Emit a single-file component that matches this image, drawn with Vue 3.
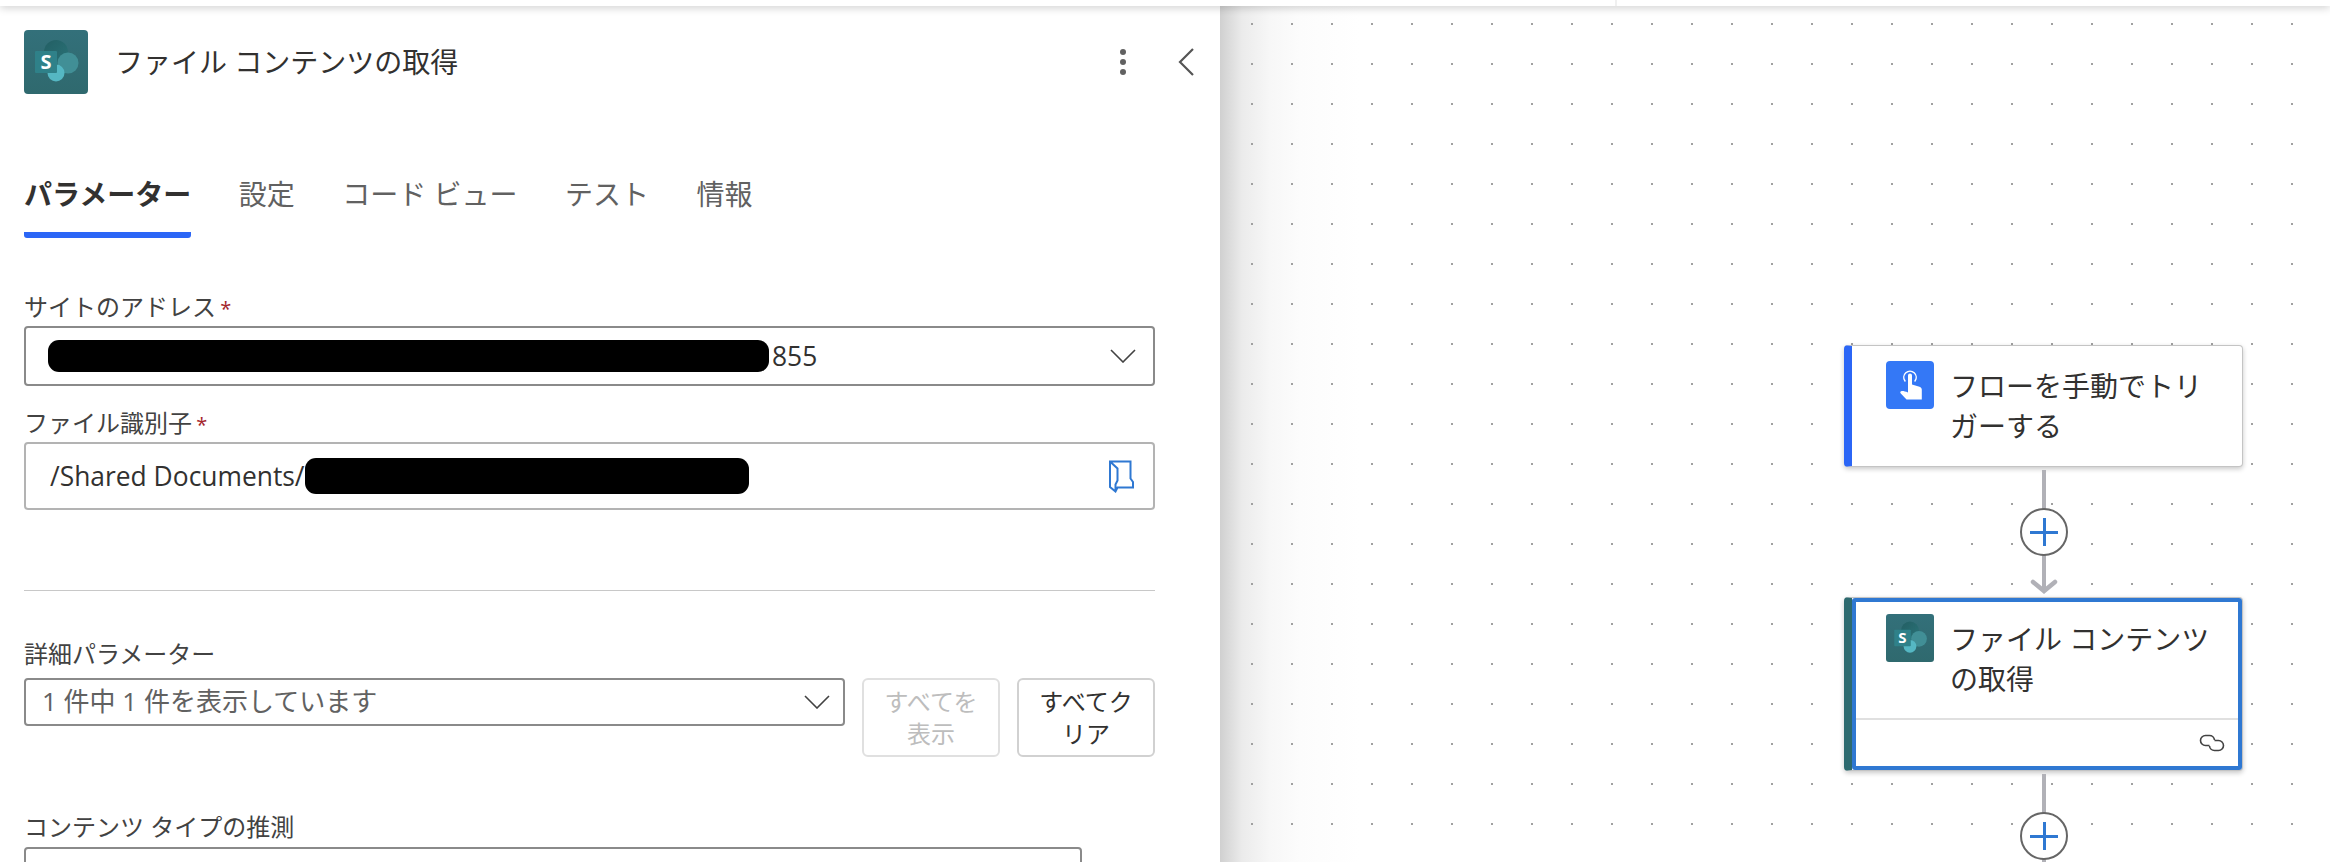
<template>
  <div class="page">
    <svg class="defs" width="0" height="0">
      <defs>
        <linearGradient id="spTile" x1="0" y1="0" x2="0" y2="1">
          <stop offset="0" stop-color="#33707a" />
          <stop offset="1" stop-color="#2f696e" />
        </linearGradient>
        <linearGradient id="spTop" x1="0" y1="0" x2="1" y2="1">
          <stop offset="0" stop-color="#235f64" />
          <stop offset="1" stop-color="#2a7277" />
        </linearGradient>
        <symbol id="spIcon" viewBox="0 0 64 64">
          <rect width="64" height="64" rx="4" fill="url(#spTile)" />
          <circle cx="32" cy="22" r="12" fill="url(#spTop)" />
          <circle cx="44" cy="33" r="10.500" fill="#418f96" />
          <circle cx="32" cy="43" r="8.500" fill="#55b7c3" />
          <rect x="11" y="21" width="22" height="22" rx="1" fill="#2f8189" />
          <text x="22" y="39" text-anchor="middle" class="sp-letter">S</text>
        </symbol>
      </defs>
    </svg>

    <div class="topbar"><span class="topbar-sep"></span></div>

    <div class="main">
      <aside class="panel">
        <header class="panel-head">
          <svg class="head-icon"><use href="#spIcon" /></svg>
          <div class="panel-title">ファイル コンテンツの取得</div>
          <svg class="kebab" width="8" height="28" viewBox="0 0 8 28">
            <circle cx="4" cy="4" r="3" />
            <circle cx="4" cy="14" r="3" />
            <circle cx="4" cy="24" r="3" />
          </svg>
          <svg class="collapse" width="16" height="28" viewBox="0 0 16 28">
            <path d="M15 1L2 14l13 13" />
          </svg>
        </header>

        <nav class="tabs">
          <div v-for="t in tabs" :key="t" class="tab" :class="{ active: t === activeTab }">{{ t }}</div>
        </nav>

        <label class="lbl first">サイトのアドレス <span class="req">*</span></label>
        <div class="field dark site">
          <span class="redact r1"></span>
          <span class="val">855</span>
          <svg class="chev" width="26" height="14" viewBox="0 0 26 14"><path d="M1 1l12 12L25 1" /></svg>
        </div>

        <label class="lbl second">ファイル識別子 <span class="req">*</span></label>
        <div class="field light file">
          <span class="val path">/Shared Documents/</span>
          <span class="redact r2"></span>
          <svg class="folder" width="25" height="33" viewBox="0 0 25 33">
            <path d="M1 1.500H21.500V18.500L24 22V27.500H8.500L6.500 31.500L1 27ZM1 1.500L8.500 8.500V20.500L6.500 24.500V31.500" />
          </svg>
        </div>

        <div class="divider"></div>

        <label class="lbl third">詳細パラメーター</label>
        <div class="adv-row">
          <div class="field dark select">
            <span class="placeholder">1 件中 1 件を表示しています</span>
            <svg class="chev small" width="26" height="14" viewBox="0 0 26 14"><path d="M1 1l12 12L25 1" /></svg>
          </div>
          <button class="btn disabled">すべてを表示</button>
          <button class="btn">すべてクリア</button>
        </div>

        <label class="lbl fourth">コンテンツ タイプの推測</label>
        <div class="field dark last"></div>
      </aside>

      <section class="canvas">
        <div class="node trigger">
          <div class="node-inner">
            <div class="node-main">
              <svg class="node-icon" width="48" height="48" viewBox="0 0 48 48">
                <rect width="48" height="48" rx="4" fill="#3478f6" />
                <path d="M19 20a6.200 6.200 0 1 1 10 0" fill="none" stroke="#fff" stroke-width="1.500" stroke-linecap="round" />
                <path d="M22 14.500a2 2 0 0 1 4 0V23.500l7.500 2.300c1.500.5 2.300 1.500 2.300 3V38.500H20.500L14.800 32.500c-.9-1-.6-2 .4-2.300 1.400-.4 4 .2 6.800 1.300Z" fill="#fff" />
              </svg>
              <div class="node-text">フローを手動でトリガーする</div>
            </div>
          </div>
        </div>

        <div class="wire w1"></div>
        <div class="plus p1"></div>
        <svg class="arrow" width="28" height="16" viewBox="0 0 28 16"><path d="M3 3l11 9 11-9" /></svg>

        <div class="node sharepoint selected">
          <div class="node-inner">
            <div class="node-main">
              <svg class="node-icon" width="48" height="48"><use href="#spIcon" /></svg>
              <div class="node-text">ファイル コンテンツの取得</div>
            </div>
            <div class="node-foot">
              <svg width="26" height="18" viewBox="0 0 26 18">
                <path d="M10.500 11.500H6.500a5 5 0 0 1 0-10H10.500a5 5 0 0 1 5 4.500" />
                <path d="M15.500 6.500H19.500a5 5 0 0 1 0 10H15.500a5 5 0 0 1-5-4.500" />
              </svg>
            </div>
          </div>
        </div>

        <div class="wire w2"></div>
        <div class="plus p2"></div>
      </section>
    </div>
  </div>
</template>

<script setup>
const tabs = ['パラメーター', '設定', 'コード ビュー', 'テスト', '情報']
const activeTab = 'パラメーター'
</script>

<style scoped>
.page {
  width: 2330px;
  height: 862px;
  overflow: hidden;
  background: #fff;
  font-family: "Open Sans", "Noto Sans CJK JP", sans-serif;
  color: #323130;
  display: flex;
  flex-direction: column;
}

.defs {
  position: absolute;
}

.sp-letter {
  font-family: "Open Sans", sans-serif;
  font-size: 20px;
  font-weight: 700;
  fill: #fff;
}

.topbar {
  height: 6px;
  flex: none;
  padding-left: 1615px;
  background: #fff;
  box-shadow: 0 1px 8px rgba(0, 0, 0, 0.25);
  position: relative;
  z-index: 2;
}

.topbar-sep {
  display: block;
  width: 2px;
  height: 6px;
  background: #f0f0f0;
}

.main {
  flex: 1;
  display: flex;
  min-height: 0;
}

.panel {
  width: 1220px;
  flex: none;
  box-sizing: border-box;
  padding: 24px 65px 0 24px;
  background: #fff;
  overflow: hidden;
}

.panel-head {
  display: flex;
  align-items: center;
  height: 64px;
}

.head-icon {
  width: 64px;
  height: 64px;
  flex: none;
}

.panel-title {
  margin-left: 27px;
  font-size: 28px;
  line-height: 40px;
  flex: 1;
}

.kebab {
  fill: #616161;
  margin-right: 51px;
}

.collapse {
  fill: none;
  stroke: #555;
  stroke-width: 2.200;
  margin-right: -39px;
}

.tabs {
  display: flex;
  gap: 47.500px;
  margin-top: 80px;
}

.tab {
  font-size: 28px;
  line-height: 40px;
  height: 64px;
  color: #616161;
  box-sizing: border-box;
  white-space: nowrap;
}

.tab.active {
  color: #323130;
  font-weight: 700;
  border-bottom: 6px solid #2b66f6;
  border-radius: 0 0 3px 3px;
}

.lbl {
  display: block;
  height: 32px;
  font-size: 24px;
  line-height: 32px;
  color: #424242;
}

.lbl.first {
  margin-top: 53px;
}

.lbl.second {
  margin-top: 21px;
}

.lbl.third {
  margin-top: 47px;
}

.lbl.fourth {
  margin-top: 54px;
}

.req {
  color: #a4262c;
  font-size: 20px;
  margin-left: -2px;
}

.field {
  box-sizing: border-box;
  background: #fff;
  border-radius: 4px;
  display: flex;
  align-items: center;
  margin-top: 3px;
}

.field.dark {
  border: 2px solid #8a8a8a;
}

.field.light {
  border: 2px solid #b3b3b3;
}

.site {
  height: 60px;
  padding-left: 22px;
}

.file {
  height: 68px;
  padding-left: 24px;
}

.val {
  font-size: 26.400px;
  color: #323130;
}

.redact {
  display: block;
  background: #000;
  border-radius: 11px;
  flex: none;
}

.r1 {
  width: 721px;
  height: 32px;
  margin-right: 3px;
}

.r2 {
  width: 444px;
  height: 36px;
}

.chev {
  fill: none;
  stroke: #424242;
  stroke-width: 1.600;
  margin-left: auto;
  margin-right: 17px;
}

.folder {
  fill: none;
  stroke: #2f78d2;
  stroke-width: 2;
  margin-left: auto;
  margin-right: 19px;
}

.divider {
  height: 1px;
  margin-top: 80px;
  background: #c8c8c8;
}

.adv-row {
  display: flex;
  align-items: flex-start;
  gap: 17px;
  margin-top: 8px;
}

.select {
  width: 821px;
  height: 48px;
  padding-left: 16px;
  margin-top: 0;
  flex: none;
}

.placeholder {
  font-size: 26px;
  line-height: 32px;
  margin-top: -2px;
  color: #616161;
}

.chev.small {
  margin-right: 13px;
}

.btn {
  width: 138px;
  height: 79px;
  flex: none;
  box-sizing: border-box;
  padding: 0 14px;
  border: 2px solid #d1d1d1;
  border-radius: 6px;
  background: #fff;
  font: inherit;
  font-size: 24px;
  line-height: 32px;
  color: #323130;
}

.btn.disabled {
  color: #bdbdbd;
  border-color: #e0e0e0;
}

.last {
  width: 1058px;
  height: 60px;
  margin-top: 4px;
}

.canvas {
  flex: 1;
  position: relative;
  overflow: hidden;
  background-color: #fff;
  background-image:
    radial-gradient(circle, #a0a0a0 1px, transparent 1.300px),
    linear-gradient(90deg, #d0d0d0 0, #ebebeb 22px, #f7f7f7 50px, #fcfcfc 80px, #fff 140px);
  background-size: 40px 40px, 100% 100%;
  background-position: 12px -2px, 0 0;
}

.node {
  position: absolute;
  left: 624px;
  width: 399px;
  box-sizing: border-box;
  background: #fff;
  border: 1.500px solid #c4c4c4;
  border-left: 8px solid #2b66f6;
  border-radius: 4px;
  box-shadow: 0 2px 5px rgba(0, 0, 0, 0.22);
  display: flex;
}

.node-inner {
  flex: 1;
  display: flex;
  flex-direction: column;
  min-width: 0;
}

.trigger {
  top: 339px;
  height: 122px;
}

.sharepoint {
  top: 591px;
  height: 174px;
  border-left-color: #2d6a6f;
}

.node-main {
  display: flex;
  align-items: flex-start;
  gap: 16px;
  padding: 15px 24px 0 34px;
}

.selected .node-inner {
  border: 4px solid #2f78d2;
  border-radius: 3px;
}

.selected .node-main {
  padding: 12px 20px 0 30px;
  height: 116px;
  box-sizing: border-box;
}

.node-icon {
  flex: none;
}

.node-text {
  font-size: 28px;
  line-height: 40px;
  margin-top: 5px;
  color: #323130;
}

.node-foot {
  flex: 1;
  border-top: 2px solid #e0e0e0;
  display: flex;
  align-items: center;
  justify-content: flex-end;
  padding-right: 13px;
}

.node-foot svg {
  fill: none;
  stroke: #424242;
  stroke-width: 1.600;
}

.wire {
  position: absolute;
  left: 822px;
  width: 4px;
  background: #b1b1b7;
}

.w1 {
  top: 464px;
  height: 122px;
}

.w2 {
  top: 768px;
  height: 90px;
}

.arrow {
  position: absolute;
  left: 810px;
  top: 573px;
  fill: none;
  stroke: #b1b1b7;
  stroke-width: 4.500;
  stroke-linecap: round;
}

.plus {
  position: absolute;
  left: 800px;
  width: 48px;
  height: 48px;
  box-sizing: border-box;
  border: 2px solid #666;
  border-radius: 50%;
  background-color: #fff;
  background-image: linear-gradient(#2f78d2, #2f78d2), linear-gradient(#2f78d2, #2f78d2);
  background-size: 28px 3px, 3px 28px;
  background-position: center;
  background-repeat: no-repeat;
}

.p1 {
  top: 502px;
}

.p2 {
  top: 806px;
}
</style>
